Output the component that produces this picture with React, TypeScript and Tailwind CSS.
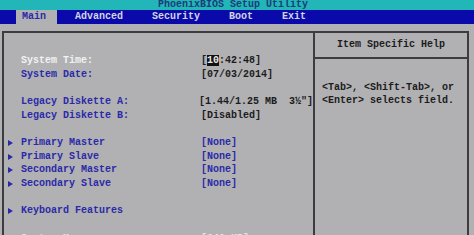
import React from "react";

const font = { fontFamily: '"Liberation Mono", "DejaVu Sans Mono", monospace' };

function Arrow() {
  return (
    <svg width="5" height="6" viewBox="0 0 5 6" className="mr-[8px] ml-[4px]">
      <path d="M0 0 L5 3 L0 6 Z" fill="#2a2aa8" />
    </svg>
  );
}

function Row({
  label,
  value,
  arrow,
  labelClass = "text-[#2a2aa8]",
  valueClass = "text-[#1c1c1c]",
}: {
  label?: string;
  value?: React.ReactNode;
  arrow?: boolean;
  labelClass?: string;
  valueClass?: string;
}) {
  return (
    <div className="flex h-[13.7px] items-center leading-none">
      <div className={`flex w-[197px] items-center ${arrow ? "" : "pl-[17px]"} ${labelClass}`}>
        {arrow && <Arrow />}
        <span className="whitespace-pre">{label}</span>
      </div>
      <span className={`whitespace-pre ${valueClass}`}>{value}</span>
    </div>
  );
}

export default function App() {
  return (
    <div
      className="w-[474px] h-[235px] overflow-hidden bg-[#b1b1b3] text-[10px] font-bold"
      style={font}
    >
      {/* title */}
      <div className="flex h-[10px] items-center bg-[#22b6b8] pl-[158px] text-[10px] leading-none text-[#1b3c78]">
        PhoenixBIOS Setup Utility
      </div>

      {/* menu */}
      <div className="flex h-[14px] items-center bg-[#0a0aaa] pl-[16px] leading-none text-[#d4d4e4]">
        <div className="flex h-full w-[41px] items-center bg-[#b1b1b3] pl-[6px] text-[#2a2aa8]">
          Main
        </div>
        <div className="ml-[18px] flex gap-[29px]">
          <span>Advanced</span>
          <span>Security</span>
          <span>Boot</span>
          <span>Exit</span>
        </div>
      </div>

      {/* body */}
      <div className="mt-[7px] ml-[2px] flex h-[300px]">
        <div className="w-[313px] border-l-2 border-t-2 border-r-2 border-[#3c3c40] pt-[21px]">
          <Row
            label="System Time:"
            labelClass="text-[#f2f2f4]"
            value={
              <>
                [<span className="bg-[#111] text-[#e8e8e8]">10</span>:42:48]
              </>
            }
          />
          <Row label="System Date:" value="[07/03/2014]" />
          <Row />
          <Row label="Legacy Diskette A:" value={'[1.44/1.25 MB  3½"]'} />
          <Row label="Legacy Diskette B:" value="[Disabled]" />
          <Row />
          <Row arrow label="Primary Master" value="[None]" valueClass="text-[#2a2aa8]" />
          <Row arrow label="Primary Slave" value="[None]" valueClass="text-[#2a2aa8]" />
          <Row arrow label="Secondary Master" value="[None]" valueClass="text-[#2a2aa8]" />
          <Row arrow label="Secondary Slave" value="[None]" valueClass="text-[#2a2aa8]" />
          <Row />
          <Row arrow label="Keyboard Features" />
          <Row />
          <Row
            label="System Memory:"
            labelClass="text-[#e4e4ea]"
            value="[640 KB]"
            valueClass="text-[#e4e4ea]"
          />
        </div>
        <div className="w-[154px] border-t-2 border-r-2 border-[#3c3c40]">
          <div className="flex h-[26px] items-center justify-center border-b-2 border-[#3c3c40] leading-none text-[#1c1c1c]">
            Item Specific Help
          </div>
          <div className="pt-[22px] pl-[7px] leading-[13px] text-[#1c1c1c]">
            <div className="whitespace-pre">{"<Tab>, <Shift-Tab>, or"}</div>
            <div className="whitespace-pre">{"<Enter> selects field."}</div>
          </div>
        </div>
      </div>
    </div>
  );
}
